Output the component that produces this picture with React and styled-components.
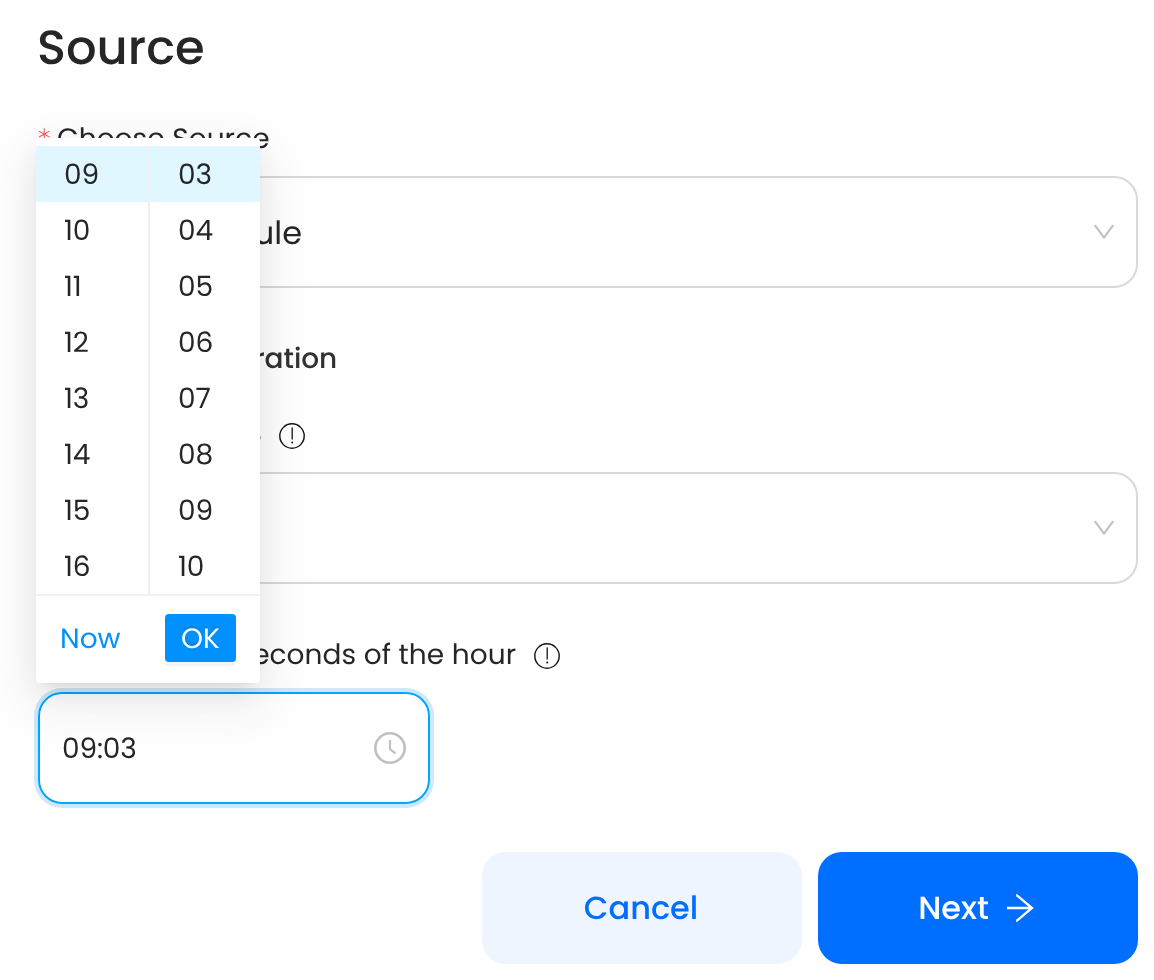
import React from 'react';
import styled, { createGlobalStyle } from 'styled-components';

const Global = createGlobalStyle`
  *, *::before, *::after { box-sizing: border-box; }
  body {
    margin: 0;
    background: #fff;
    color: #262626;
    font-family: Poppins, Inter, "Liberation Sans", sans-serif;
    font-size: 28px;
    text-rendering: geometricPrecision;
    overflow: hidden;
  }
  button { font: inherit; text-rendering: inherit; border: 0; padding: 0; }
`;

const Page = styled.main`
  position: relative;
  width: 1154px;
  height: 980px;
  padding: 16px 16px 0 38px;
  display: flex;
  flex-direction: column;
  overflow: hidden;
  will-change: transform;
`;

const Title = styled.h1`
  margin: 0 0 42px -1px;
  height: 64px;
  line-height: 64px;
  font-size: 48px;
  font-weight: 500;
`;

const Label = styled.label`
  display: flex;
  align-items: center;
  height: 32px;
  padding-top: 2px;
  margin-bottom: ${p => p.$gap || 22}px;
  white-space: nowrap;
  letter-spacing: ${p => p.$spacing || 0}px;
`;

const HourLabel = styled(Label)`
  margin-top: 54px;
`;

const Required = styled.span`
  width: 19px;
  flex: none;
  color: #ff4d4f;
  font-family: "DejaVu Sans", sans-serif;
  font-weight: 200;
  font-size: 25px;
  line-height: 34px;
  letter-spacing: 0;
  -webkit-text-stroke: 0.3px #ff4d4f;
`;

const SectionTitle = styled.h2`
  margin: 54px 0 46px;
  height: 32px;
  line-height: 34px;
  font-size: 28px;
  font-weight: 500;
  color: #333;
  letter-spacing: -0.05px;
`;

const Select = styled.div`
  height: 112px;
  flex: none;
  border: 2px solid #d9d9d9;
  border-radius: 24px;
  padding: 0 22px;
  display: flex;
  align-items: center;
  justify-content: space-between;
  font-size: 32px;
`;

const SelectValue = styled.span`
  width: 240px;
  padding-top: 4px;
  text-align: right;
  white-space: nowrap;
`;

const TimeInput = styled.div`
  width: 392px;
  height: 112px;
  flex: none;
  border: 2px solid #00a6ff;
  border-radius: 24px;
  box-shadow: 0 0 0 4px #cfe8ff;
  padding: 0 22px;
  display: flex;
  align-items: center;
  justify-content: space-between;
`;

const TimeValue = styled.span`
  padding-top: 2px;
  letter-spacing: -0.15px;
`;

const Actions = styled.div`
  margin-top: 48px;
  display: flex;
  justify-content: flex-end;
  gap: 16px;
`;

const Button = styled.button`
  width: 320px;
  height: 112px;
  border-radius: 24px;
  padding-right: ${p => (p.$primary ? 4 : 2)}px;
  display: flex;
  align-items: center;
  justify-content: center;
  gap: 17px;
  font-size: 32px;
  font-weight: 500;
  color: ${p => (p.$primary ? '#fff' : '#006eff')};
  background: ${p => (p.$primary ? '#006eff' : '#eef5ff')};
`;

const ButtonText = styled.span`
  padding-top: 2px;
`;

const Picker = styled.div`
  position: absolute;
  left: 36px;
  top: 138px;
  width: 224px;
  height: 545px;
  padding-top: 8px;
  background: #fff;
  border-radius: 4px;
  box-shadow: 0 6px 12px -8px rgba(0, 0, 0, 0.12), 0 12px 32px 0 rgba(0, 0, 0, 0.08),
    0 18px 56px 16px rgba(0, 0, 0, 0.05);
`;

const Columns = styled.div`
  display: flex;
  height: 448px;
`;

const Column = styled.div`
  width: 112px;
  border-left: ${p => (p.$divided ? '2px solid #f0f0f0' : '0')};
`;

const Cell = styled.div`
  height: 56px;
  line-height: 58px;
  padding-left: 28px;
  letter-spacing: -0.2px;
  background: ${p => (p.$selected ? '#e0f7ff' : 'transparent')};
`;

const PickerFooter = styled.div`
  height: 88px;
  border-top: 2px solid #f0f0f0;
  padding: 18px 24px;
  display: flex;
  align-items: flex-start;
  justify-content: space-between;
`;

const NowButton = styled.button`
  height: 48px;
  padding-top: 2px;
  color: #0091ff;
  background: none;
`;

const OkButton = styled.button`
  width: 71px;
  height: 48px;
  padding-top: 2px;
  border-radius: 4px;
  color: #fff;
  background: #0091ff;
  box-shadow: 0 4px 0 rgba(0, 0, 0, 0.045);
  text-shadow: 0 -2px 0 rgba(0, 0, 0, 0.12);
`;

const InfoIcon = styled.svg`
  flex: none;
  margin: ${p => (p.$lift ? `0 0 ${p.$lift}px 16px` : '2px 0 0 17px')};
`;

const Info = ({ lift = 0 }) => (
  <InfoIcon $lift={lift} width="28" height="28" viewBox="0 0 28 28" fill="none" stroke="#111">
    <circle cx="14" cy="14" r="12.2" strokeWidth="1.4" />
    <path d="M14.2 5.5v12" strokeWidth="1.3" />
    <circle cx="14.2" cy="20.5" r="1" fill="#111" stroke="none" />
  </InfoIcon>
);

const Chevron = () => (
  <svg width="20" height="16" viewBox="0 0 20 16" fill="none" stroke="#bfbfbf" strokeWidth="2">
    <path d="M0.8 1.2L10 13.6L19.2 1.2" />
  </svg>
);

const Clock = () => (
  <svg width="32" height="32" viewBox="0 0 32 32" fill="none" stroke="#bfbfbf">
    <circle cx="16" cy="16" r="14.7" strokeWidth="2.6" />
    <path d="M16 8v9.2l5.6 4.2" strokeWidth="2.2" />
  </svg>
);

const Arrow = () => (
  <svg width="28" height="28" viewBox="0 0 28 28" fill="none" stroke="#fff" strokeWidth="2.3">
    <path d="M1 14h24M10 1.4h1L26 14L11 26.6h-1" />
  </svg>
);

const hours = ['09', '10', '11', '12', '13', '14', '15', '16'];
const minutes = ['03', '04', '05', '06', '07', '08', '09', '10'];

export default function App() {
  return (
    <>
      <Global />
      <Page>
        <Title>Source</Title>
        <Label $spacing={0.05}><Required>*</Required>Choose Source</Label>
        <Select><SelectValue>Daily Schedule</SelectValue><Chevron /></Select>
        <SectionTitle>Source Configuration</SectionTitle>
        <Label $gap={20} $spacing={0.01}><Required>*</Required>Schedule Type<Info lift={2} /></Label>
        <Select><SelectValue /><Chevron /></Select>
        <HourLabel $spacing={0.06}><Required>*</Required>Minutes and seconds of the hour<Info /></HourLabel>
        <TimeInput><TimeValue>09:03</TimeValue><Clock /></TimeInput>
        <Actions>
          <Button><ButtonText>Cancel</ButtonText></Button>
          <Button $primary><ButtonText>Next</ButtonText><Arrow /></Button>
        </Actions>
        <Picker>
          <Columns>
            <Column>{hours.map((h, i) => <Cell key={h} $selected={i === 0}>{h}</Cell>)}</Column>
            <Column $divided>{minutes.map((m, i) => <Cell key={m} $selected={i === 0}>{m}</Cell>)}</Column>
          </Columns>
          <PickerFooter>
            <NowButton>Now</NowButton>
            <OkButton>OK</OkButton>
          </PickerFooter>
        </Picker>
      </Page>
    </>
  );
}
